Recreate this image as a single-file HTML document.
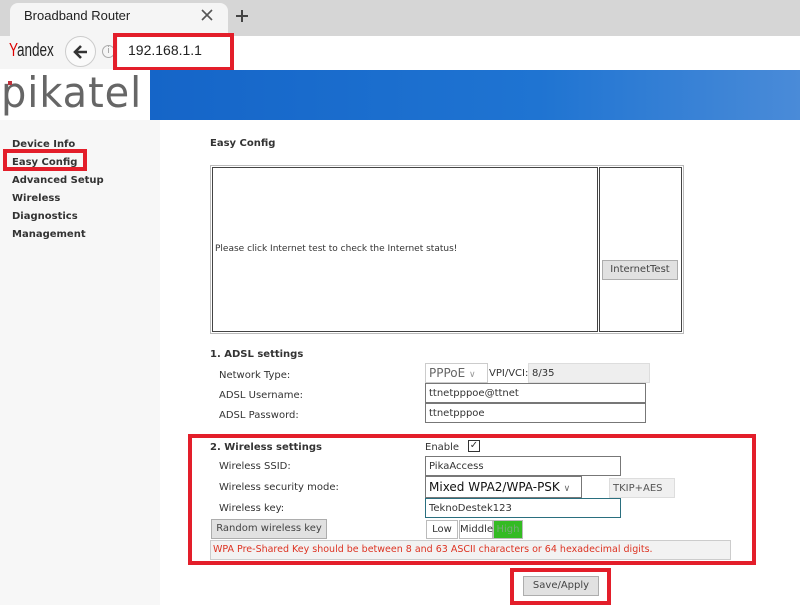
<!DOCTYPE html>
<html><head><meta charset="utf-8"><style>
*{margin:0;padding:0;box-sizing:border-box}
body{width:800px;height:605px;overflow:hidden;position:relative;background:#fff;font-family:"DejaVu Sans","Liberation Sans",sans-serif;font-size:10px;color:#333}
.a{position:absolute}
.b{font-weight:bold;color:#333}
.in{position:absolute;background:#fff;border:1px solid #777;font-size:10px;padding-left:3px;padding-top:1px;line-height:17px;height:20px;white-space:nowrap;overflow:hidden}
.btn{position:absolute;background:#e1e1e1;border:1px solid #adadad;font-size:10px;text-align:center;color:#444}
.red{position:absolute;border:4px solid #e31e2a}
</style></head><body>
<div class="a" style="left:0;top:0;width:800px;height:36px;background:#d6d6d6"></div>
<div class="a" style="left:10px;top:3px;width:218px;height:33px;background:#f5f5f5;border-radius:8px 8px 0 0"></div>
<div class="a" style="left:24px;top:8px;font-family:'Liberation Sans',sans-serif;font-size:13px;color:#222">Broadband Router</div>
<svg class="a" style="left:200px;top:8px" width="14" height="14"><path d="M2 2L12 12M12 2L2 12" stroke="#555" stroke-width="1.6"/></svg>
<svg class="a" style="left:235px;top:9px" width="14" height="14"><path d="M7 1V13M1 7H13" stroke="#444" stroke-width="2"/></svg>
<div class="a" style="left:0;top:36px;width:800px;height:33px;background:#f5f5f5"></div>
<div class="a" style="left:9px;top:40px;font-family:'Liberation Sans',sans-serif;font-size:18px;color:#222;transform:scaleX(.75);transform-origin:left"><span style="color:#d00">Y</span>andex</div>
<div class="a" style="left:65px;top:36px;width:31px;height:31px;border-radius:50%;border:1px solid #ccc;background:#fafafa"></div>
<svg class="a" style="left:72px;top:43px" width="18" height="18"><path d="M15 9H4M9 3L3 9L9 15" stroke="#333" stroke-width="2.6" fill="none"/></svg>
<div class="a" style="left:102px;top:45px;width:13px;height:13px;border-radius:50%;border:1px solid #aaa;font-size:9px;text-align:center;line-height:11px;color:#999">i</div>
<div class="a" style="left:118px;top:36px;width:682px;height:33px;background:#fff"></div>
<div class="red" style="left:113px;top:33px;width:121px;height:38px"></div>
<div class="a" style="left:128px;top:42px;font-family:'Liberation Sans',sans-serif;font-size:14px;color:#222">192.168.1.1</div>
<div class="a" style="left:0;top:70px;width:150px;height:50px;background:#fff"></div>
<div class="a" style="left:1px;top:68px;font-family:'DejaVu Sans';font-size:42px;color:#666;letter-spacing:1px;transform:scaleX(.95);transform-origin:left">pikatel</div>
<div class="a" style="left:8px;top:81px;width:4px;height:4px;background:#c0303a"></div>
<div class="a" style="left:150px;top:70px;width:650px;height:50px;background:linear-gradient(90deg,#1565c8,#1f74d2 60%,#4a8bd8)"></div>
<div class="a" style="left:0;top:120px;width:160px;height:485px;background:#f7f7f7"></div>
<div class="a b" style="left:12px;top:136px;line-height:18px">Device Info<br>Easy Config<br>Advanced Setup<br>Wireless<br>Diagnostics<br>Management</div>
<div class="red" style="left:3px;top:149px;width:84px;height:22px"></div>
<div class="a b" style="left:210px;top:138px">Easy Config</div>
<div class="a" style="left:210px;top:165px;width:474px;height:169px;border:1px solid #bbb"></div>
<div class="a" style="left:212px;top:167px;width:386px;height:165px;border:1px solid #444"></div>
<div class="a" style="left:599px;top:167px;width:83px;height:165px;border:1px solid #444"></div>
<div class="a" style="left:215px;top:244px;font-size:9px">Please click Internet test to check the Internet status!</div>
<div class="btn" style="left:602px;top:260px;width:76px;height:20px;line-height:18px">InternetTest</div>
<div class="a b" style="left:210px;top:349px">1. ADSL settings</div>
<div class="a" style="left:219px;top:366px;line-height:20px">Network Type:<br>ADSL Username:<br>ADSL Password:</div>
<div class="in" style="left:425px;top:363px;width:63px;border-color:#ccc;font-size:12px;color:#666">PPPoE <span style="font-size:9px;color:#999">∨</span></div>
<div class="a" style="left:489px;top:368px">VPI/VCI:</div>
<div class="in" style="left:528px;top:363px;width:122px;background:#eee;border-color:#ddd">8/35</div>
<div class="in" style="left:425px;top:383px;width:221px">ttnetpppoe@ttnet</div>
<div class="in" style="left:425px;top:403px;width:221px">ttnetpppoe</div>
<div class="red" style="left:188px;top:434px;width:568px;height:131px"></div>
<div class="a b" style="left:210px;top:442px">2. Wireless settings</div>
<div class="a" style="left:425px;top:442px">Enable</div>
<div class="a" style="left:468px;top:440px;width:12px;height:12px;border:1px solid #333;font-size:10px;line-height:10px;text-align:center">✓</div>
<div class="a" style="left:219px;top:461px">Wireless SSID:</div>
<div class="in" style="left:425px;top:456px;width:196px">PikaAccess</div>
<div class="a" style="left:219px;top:482px">Wireless security mode:</div>
<div class="in" style="left:425px;top:476px;width:157px;height:22px;font-size:12px;color:#111;line-height:19px">Mixed WPA2/WPA-PSK <span style="font-size:9px;color:#666">∨</span></div>
<div class="in" style="left:609px;top:478px;width:66px;background:#f0f0f0;border-color:#ddd;color:#555">TKIP+AES</div>
<div class="a" style="left:219px;top:503px">Wireless key:</div>
<div class="in" style="left:425px;top:498px;width:196px;border-color:#2a6f7f">TeknoDestek123</div>
<div class="btn" style="left:211px;top:519px;width:116px;height:20px;line-height:18px">Random wireless key</div>
<div class="a" style="left:426px;top:520px;width:32px;height:19px;border:1px solid #bbb;text-align:center;line-height:17px">Low</div>
<div class="a" style="left:459px;top:520px;width:34px;height:19px;border:1px solid #bbb;text-align:center;line-height:17px">Middle</div>
<div class="a" style="left:493px;top:520px;width:30px;height:19px;background:#33bb22;border:1px solid #bbb;text-align:center;line-height:17px;color:#7a7">High</div>
<div class="a" style="left:210px;top:540px;width:521px;height:20px;background:#f2f2f2;border:1px solid #ccc;color:#d32;font-size:9.5px;line-height:18px;padding-left:2px">WPA Pre-Shared Key should be between 8 and 63 ASCII characters or 64 hexadecimal digits.</div>
<div class="red" style="left:510px;top:568px;width:101px;height:37px"></div>
<div class="btn" style="left:523px;top:576px;width:76px;height:20px;line-height:18px">Save/Apply</div>
</body></html>
